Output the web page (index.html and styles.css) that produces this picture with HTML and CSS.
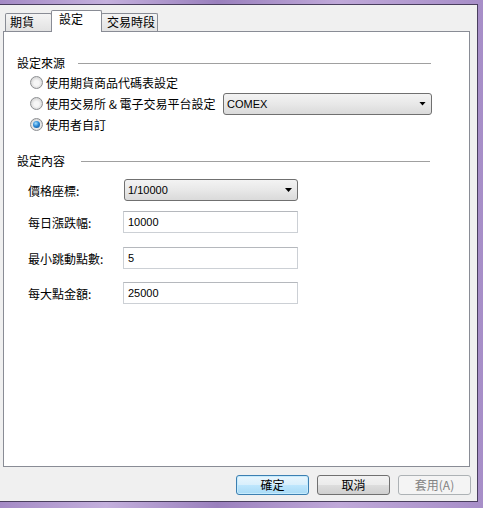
FILE: index.html
```html
<!DOCTYPE html>
<html lang="zh-Hant">
<head>
<meta charset="utf-8">
<title>設定</title>
<link rel="stylesheet" href="styles.css">
</head>
<body>
<div class="window">
  <div class="tabs">
    <div class="tab t1">期貨</div>
    <div class="tab t2 active">設定</div>
    <div class="tab t3">交易時段</div>
  </div>
  <div class="panel">
    <div class="section src">
      <div class="legend legend1"><span>設定來源</span><i class="rule"></i></div>
      <div class="opt"><span class="radio"></span>使用期貨商品代碼表設定</div>
      <div class="opt"><span class="radio"></span>使用交易所 &amp; 電子交易平台設定<div class="combo wide"><span class="val">COMEX</span><span class="arrow"></span></div></div>
      <div class="opt"><span class="radio on"></span>使用者自訂</div>
    </div>
    <div class="section content">
      <div class="legend legend2"><span>設定內容</span><i class="rule"></i></div>
      <div class="field f1"><label>價格座標:</label><div class="combo narrow"><span class="val">1/10000</span><span class="arrow"></span></div></div>
      <div class="field f2"><label>每日漲跌幅:</label><input class="edit" type="text" value="10000"></div>
      <div class="field f3"><label>最小跳動點數:</label><input class="edit" type="text" value="5"></div>
      <div class="field f4"><label>每大點金額:</label><input class="edit" type="text" value="25000"></div>
    </div>
  </div>
  <div class="buttons">
    <button class="btn default" type="button">確定</button>
    <button class="btn" type="button">取消</button>
    <button class="btn" type="button" disabled>套用(A)</button>
  </div>
</div>
</body>
</html>
```

FILE: styles.css
```css
* { box-sizing: border-box; }

html, body {
  margin: 0;
  height: 508px;
  overflow: hidden;
}

body {
  background: linear-gradient(90deg, #a48ac5 0%, #c4b0dd 22%, #9a80bd 45%, #c0a9d9 70%, #a78ec8 100%);
  font-family: "Noto Sans CJK TC", "Noto Sans CJK SC", sans-serif;
  font-size: 12px;
  color: #000;
}

.window {
  margin: 4px 5px 0 0;
  height: 498px;
  border: 1px solid #4a3f5e;
  border-left: none;
  background: #f0f0f0;
  display: flex;
  flex-direction: column;
}

/* tabs */
.tabs {
  height: 26px;
  display: flex;
  align-items: flex-end;
  padding-left: 5px;
  flex: none;
}

.tab {
  height: 18px;
  border: 1px solid #898c95;
  border-bottom: none;
  border-radius: 2px 2px 0 0;
  background: linear-gradient(#f4f4f4, #e2e2e2);
  line-height: 16px;
  white-space: nowrap;
}

.t1 { width: 47px; padding-left: 4px; }
.t2 {
  width: 51px;
  margin-left: -1px;
  padding-left: 7px;
  height: 22px;
  margin-bottom: -1px;
  background: #fff;
  position: relative;
  z-index: 1;
}
.t3 { width: 57px; margin-left: -1px; padding-left: 5px; }

/* panel */
.panel {
  flex: none;
  margin-left: 3px;
  width: 467px;
  height: 436px;
  border: 1px solid #898c95;
  background: #fff;
  padding-top: 23px;
}

.section {
  margin-left: 13px;
  width: 415px;
}

.legend {
  display: flex;
  align-items: center;
  height: 16px;
  line-height: 16px;
}

.legend .rule {
  flex: 1;
  height: 1px;
  background: #a0a0a0;
}

.legend1 { margin-bottom: 1px; }
.legend1 .rule { margin-left: 13px; margin-right: 1px; }
.legend2 { margin-top: 18px; }
.legend2 .rule { margin-left: 16px; margin-right: 2px; }

.opt {
  display: flex;
  align-items: center;
  height: 21px;
  padding-left: 13px;
  white-space: nowrap;
}

.radio {
  flex: none;
  position: relative;
  width: 13px;
  height: 13px;
  margin-right: 3px;
  border-radius: 50%;
  border: 1px solid #8d8f92;
  background: radial-gradient(circle at 50% 55%, #f6f6f6 0 30%, #dcdcdc 65%, #c9c9c9 100%);
}

.radio.on::after {
  content: "";
  position: absolute;
  left: 2px;
  top: 2px;
  width: 7px;
  height: 7px;
  border-radius: 50%;
  background: radial-gradient(circle at 40% 35%, #a6e1ff 0, #2d8ad6 45%, #0d4a8c 100%);
}

/* combo boxes */
.combo {
  display: flex;
  align-items: center;
  height: 22px;
  border: 1px solid #707070;
  border-radius: 3px;
  background: linear-gradient(#f3f3f3 0%, #e8e8e8 50%, #dadada 100%);
  font-family: "Liberation Sans", Arial, sans-serif;
  font-size: 11px;
  padding-left: 3px;
}

.combo.wide {
  margin-left: auto;
  width: 209px;
}

.combo.narrow {
  width: 174px;
  margin-left: 1px;
}

.arrow {
  margin-left: auto;
  margin-right: 5px;
  width: 7px;
  height: 4px;
  background: #000;
  clip-path: polygon(0 0, 100% 0, 50% 100%);
}

/* fields */
.field {
  display: flex;
  align-items: center;
  padding-left: 11px;
}

.field label {
  width: 95px;
  flex: none;
}

.f1 { margin-top: 10px; }
.f2 { margin-top: 10px; }
.f3 { margin-top: 14px; }
.f4 { margin-top: 13px; }

.edit {
  width: 175px;
  height: 22px;
  margin: 0;
  padding: 0 0 0 4px;
  border: 1px solid #ccd0d5;
  border-top-color: #b5b8bd;
  background: #fff;
  font-family: "Liberation Sans", Arial, sans-serif;
  font-size: 11px;
  color: #000;
  outline: none;
}

/* buttons */
.buttons {
  flex: 1;
  display: flex;
  justify-content: flex-end;
  align-items: flex-start;
  gap: 8px;
  padding: 8px 6px 0 0;
}

.btn {
  width: 73px;
  height: 20px;
  margin: 0;
  padding: 0;
  border: 1px solid #707070;
  border-radius: 3px;
  background: linear-gradient(#f2f2f2 0%, #ebebeb 50%, #dddddd 51%, #cfcfcf 100%);
  font-family: "Noto Sans CJK TC", "Noto Sans CJK SC", sans-serif;
  font-size: 12px;
  line-height: 16px;
  color: #000;
}

.btn.default {
  border-color: #3c7fb1;
  background: linear-gradient(#e9f6fd 0%, #d8effc 50%, #bee6fd 51%, #a8daf5 100%);
  box-shadow: inset 0 0 0 1px #c6ebfd;
}

.btn:disabled {
  border-color: #adb2b5;
  background: #f4f4f4;
  color: #838383;
}
```
